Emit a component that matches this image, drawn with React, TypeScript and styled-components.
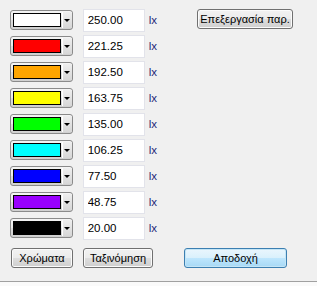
import React from "react";
import styled, { createGlobalStyle } from "styled-components";

const GlobalStyle = createGlobalStyle`
  html, body {
    margin: 0;
    padding: 0;
    background: #f0f0f0;
  }
  body {
    font-family: "Liberation Sans", Arial, sans-serif;
    font-size: 11px;
  }
`;

const levels = [
  { color: "#ffffff", value: "250.00" },
  { color: "#ff0000", value: "221.25" },
  { color: "#ffa500", value: "192.50" },
  { color: "#ffff00", value: "163.75" },
  { color: "#00ff00", value: "135.00" },
  { color: "#00ffff", value: "106.25" },
  { color: "#0000ff", value: "77.50" },
  { color: "#9900ff", value: "48.75" },
  { color: "#000000", value: "20.00" },
];

export default function App() {
  return (
    <Window>
      <GlobalStyle />
      <Main>
        <List>
          {levels.map((l) => (
            <Row key={l.value}>
              <ColorCombo>
                <Swatch $color={l.color} />
                <DropButton>
                  <Arrow />
                </DropButton>
              </ColorCombo>
              <ValueInput defaultValue={l.value} />
              <Unit>lx</Unit>
            </Row>
          ))}
        </List>
        <Side>
          <Button $width={96}>Επεξεργασία παρ.</Button>
        </Side>
      </Main>
      <Footer>
        <Button $width={62}>Χρώματα</Button>
        <Button $width={70}>Ταξινόμηση</Button>
        <Button $width={103} $default>
          Αποδοχή
        </Button>
      </Footer>
      <StatusStrip />
    </Window>
  );
}

const Window = styled.div`
  width: 317px;
  height: 286px;
  display: flex;
  flex-direction: column;
  overflow: hidden;
`;

const Main = styled.div`
  display: flex;
  flex-direction: row;
`;

const List = styled.div`
  display: flex;
  flex-direction: column;
  width: 147px;
  padding-top: 7px;
  padding-left: 10px;
`;

const Row = styled.div`
  display: flex;
  flex-direction: row;
  align-items: center;
  height: 26px;
`;

const ColorCombo = styled.div`
  box-sizing: border-box;
  width: 63px;
  height: 20px;
  display: flex;
  align-items: center;
  padding-left: 2px;
  border: 1px solid #8a8a8a;
  border-radius: 3px;
  background: linear-gradient(#f4f4f4 0%, #ebebeb 50%, #dddddd 51%, #d0d0d0 100%);
`;

const Swatch = styled.div<{ $color: string }>`
  box-sizing: border-box;
  width: 48px;
  height: 14px;
  border: 1px solid #000;
  background: ${(p) => p.$color};
`;

const DropButton = styled.div`
  flex: 1;
  height: 16px;
  margin-left: 1px;
  display: flex;
  align-items: center;
  justify-content: center;
  border-left: 1px solid #ffffff;
  background: linear-gradient(#eeeeee, #d6d6d6);
`;

const Arrow = styled.div`
  width: 0;
  height: 0;
  border-left: 3px solid transparent;
  border-right: 3px solid transparent;
  border-top: 3px solid #000;
  margin-top: 1px;
`;

const ValueInput = styled.input`
  box-sizing: border-box;
  width: 62px;
  height: 23px;
  margin-left: 10px;
  padding: 0 0 0 4px;
  border: 1px solid #e2e3ea;
  background: #fff;
  font-family: "Liberation Sans", Arial, sans-serif;
  font-size: 11.5px;
  color: #000;
  outline: none;
`;

const Unit = styled.span`
  margin-left: 4px;
  font-size: 11.5px;
  color: #1c2878;
`;

const Side = styled.div`
  padding-top: 9px;
  padding-left: 40px;
`;

const Button = styled.button<{ $width?: number; $default?: boolean }>`
  box-sizing: border-box;
  width: ${(p) => (p.$width ? `${p.$width}px` : "auto")};
  height: 20px;
  padding: 0;
  border-radius: 3px;
  border: 1px solid ${(p) => (p.$default ? "#3c7fb1" : "#707070")};
  box-shadow: inset 0 0 0 1px
    ${(p) => (p.$default ? "#c4e5f6" : "#fbfbfb")};
  background: ${(p) =>
    p.$default
      ? "linear-gradient(#eaf6fd 0%, #d9f0fc 50%, #bee6fd 51%, #a7d9f5 100%)"
      : "linear-gradient(#f2f2f2 0%, #ebebeb 50%, #dddddd 51%, #cfcfcf 100%)"};
  font-family: "Liberation Sans", Arial, sans-serif;
  font-size: 11px;
  color: #000;
  white-space: nowrap;
  overflow: hidden;
`;

const Footer = styled.div`
  display: flex;
  flex-direction: row;
  align-items: center;
  padding-top: 7px;
  padding-left: 11px;

  & > :nth-child(2) {
    margin-left: 10px;
  }
  & > :nth-child(3) {
    margin-left: 31px;
  }
`;

const StatusStrip = styled.div`
  margin-top: 13px;
  flex: 1;
  border-top: 1px solid #a0a0a0;
  background: #fafafa;
`;
